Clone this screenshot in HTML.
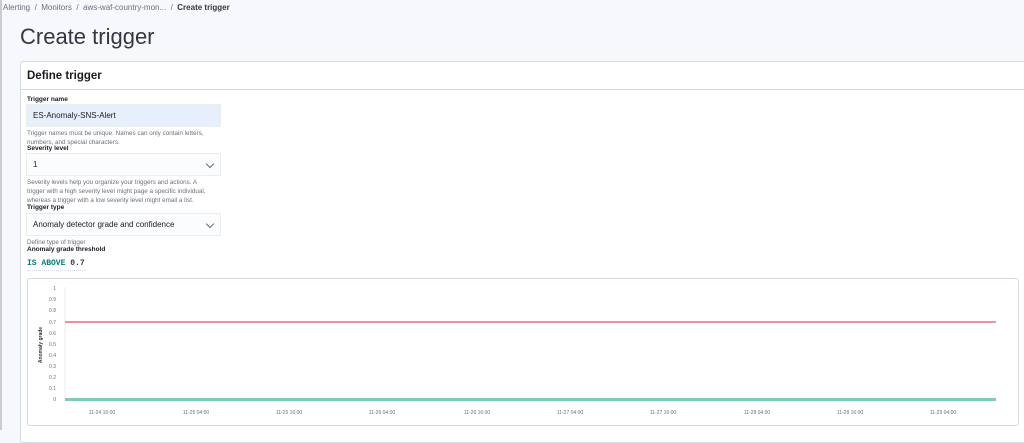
<!DOCTYPE html>
<html><head><style>
body{margin:0;width:1024px;height:430px;overflow:hidden;background:#f7f8fc;font-family:"Liberation Sans",sans-serif;position:relative;color:#1a1c21}
.lb{position:absolute;left:0;top:0;width:2px;height:430px;background:#c9ccd3}
.bc{position:absolute;left:3px;top:3px;font-size:8px;color:#69707d}
.bc b{color:#343741}
h1{position:absolute;left:20px;top:24px;margin:0;font-size:22px;font-weight:400;color:#343741}
.panel{position:absolute;left:20px;top:61px;width:1010px;height:380px;background:#fff;border:1px solid #d3dae6;border-radius:3px}
.ph{position:absolute;left:6px;top:8px;font-size:11.5px;font-weight:600}
.div{position:absolute;left:0;top:27px;width:100%;height:1px;background:#d3dae6}
.lab{position:absolute;left:6px;font-size:6.5px;font-weight:bold;color:#1a1c21}
.in{position:absolute;left:6px;width:193px;height:21px;background:#fbfcfd;border:0;box-shadow:0 0 0 1px rgba(16,22,26,.08);font-size:8px;line-height:21px;padding-left:6px;box-sizing:border-box}
.help{position:absolute;left:6px;font-size:6.3px;color:#69707d;line-height:9px;width:188px}
.chev{position:absolute;right:7px;top:7px;width:5px;height:5px;border-right:1px solid #69707d;border-bottom:1px solid #69707d;transform:rotate(45deg)}
.chart{position:absolute;left:6px;top:216px;width:990px;height:146px;border:1px solid #d3dae6;border-radius:3px;background:#fff}
</style></head><body>
<div class="lb"></div>
<div class="bc">Alerting &nbsp;/&nbsp; Monitors &nbsp;/&nbsp; aws-waf-country-mon... &nbsp;/&nbsp; <b>Create trigger</b></div>
<h1>Create trigger</h1>
<div class="panel">
<div class="ph">Define trigger</div><div class="div"></div>
<div class="lab" style="top:34px">Trigger name</div>
<div class="in" style="top:43px;background:#e7eefc">ES-Anomaly-SNS-Alert</div>
<div class="help" style="top:67px">Trigger names must be unique. Names can only contain letters, numbers, and special characters.</div>
<div class="lab" style="top:83px">Severity level</div>
<div class="in" style="top:92px">1<div class="chev"></div></div>
<div class="help" style="top:116px">Severity levels help you organize your triggers and actions. A trigger with a high severity level might page a specific individual, whereas a trigger with a low severity level might email a list.</div>
<div class="lab" style="top:142px">Trigger type</div>
<div class="in" style="top:152px">Anomaly detector grade and confidence<div class="chev"></div></div>
<div class="help" style="top:176px">Define type of trigger</div>
<div class="lab" style="top:184px">Anomaly grade threshold</div>
<div style="position:absolute;left:6px;top:197px;font-family:'Liberation Mono',monospace;font-size:8px;font-weight:bold;color:#017d73;border-bottom:1px dotted #d3dae6;padding-bottom:2px">IS ABOVE <span style="color:#343741">0.7</span></div>
<div class="chart">
<svg width="990" height="146" style="position:absolute;left:0;top:0" font-family="Liberation Sans" font-size="5" fill="#69707d">
<line x1="37" y1="8" x2="37" y2="122" stroke="#e5e7eb" stroke-width="0.7"/>
<g text-anchor="end">
<text x="28" y="11">1</text><text x="28" y="22">0.9</text><text x="28" y="33">0.8</text><text x="28" y="45">0.7</text><text x="28" y="56">0.6</text><text x="28" y="67">0.5</text><text x="28" y="78">0.4</text><text x="28" y="89">0.3</text><text x="28" y="100">0.2</text><text x="28" y="111">0.1</text><text x="28" y="122">0</text></g>
<text x="14" y="66" transform="rotate(-90 14 66)" text-anchor="middle" font-weight="bold" fill="#343741">Anomaly grade</text>
<line x1="37" y1="43" x2="968" y2="43" stroke="#e8949b" stroke-width="2"/>
<line x1="37" y1="120.5" x2="968" y2="120.5" stroke="#7fcdb9" stroke-width="3"/>
<g text-anchor="middle">
<text x="74" y="135">11-24 16:00</text><text x="168" y="135">11-25 04:00</text><text x="261" y="135">11-25 16:00</text><text x="354" y="135">11-26 04:00</text><text x="449" y="135">11-26 16:00</text><text x="542" y="135">11-27 04:00</text><text x="635" y="135">11-27 16:00</text><text x="729" y="135">11-28 04:00</text><text x="822" y="135">11-28 16:00</text><text x="915" y="135">11-29 04:00</text></g>
</svg>
</div>
</div>
</body></html>
